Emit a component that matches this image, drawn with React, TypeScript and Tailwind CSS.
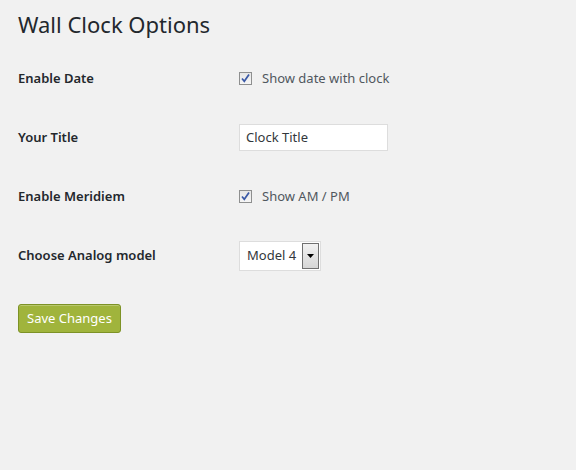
import type React from "react";

const font = { fontFamily: '"Noto Sans", "Open Sans", Arial, sans-serif' };

const CheckBox: React.FC = () => (
  <span className="flex h-[13px] w-[13px] items-center justify-center border border-[#8e8f8f] bg-gradient-to-b from-[#e6e6e6] to-[#f6f6f6]">
    <svg width="11" height="11" viewBox="0 0 11 11">
      <path d="M2 5.5 L4.3 8.3 L9 1.5" fill="none" stroke="#3a59a6" strokeWidth="1.7" />
    </svg>
  </span>
);

const Row: React.FC<{ label: string; children: React.ReactNode }> = ({ label, children }) => (
  <div className="flex h-[59px] items-center">
    <div className="w-[221px] text-[13px] font-semibold text-[#23282d]">{label}</div>
    <div className="flex items-center">{children}</div>
  </div>
);

export default function App() {
  return (
    <div className="min-h-[470px] w-[576px] bg-[#f1f1f1] px-[18px] pt-[9px]" style={font}>
      <h1 className="text-[22px] leading-[30px] font-normal text-[#23282d]">Wall Clock Options</h1>
      <div className="mt-[10px]">
        <Row label="Enable Date">
          <CheckBox />
          <span className="ml-[10px] text-[13px] text-[#50575e]">Show date with clock</span>
        </Row>
        <Row label="Your Title">
          <div className="flex h-[27px] w-[149px] items-center border border-[#dddddd] bg-white px-[6px] text-[13px] text-[#32373c]">
            Clock Title
          </div>
        </Row>
        <Row label="Enable Meridiem">
          <CheckBox />
          <span className="ml-[10px] text-[13px] text-[#50575e]">Show AM / PM</span>
        </Row>
        <Row label="Choose Analog model">
          <div className="flex h-[30px] w-[82px] items-center justify-between border border-[#dddddd] bg-white pl-[7px] pr-[1px] text-[13px] text-[#32373c]">
            <span>Model 4</span>
            <span className="flex h-[26px] w-[17px] items-center justify-center border border-[#707070] bg-gradient-to-b from-[#f2f2f2] to-[#d6d6d6]">
              <svg width="7" height="4" viewBox="0 0 7 4">
                <path d="M0 0 H7 L3.5 4 Z" fill="#000" />
              </svg>
            </span>
          </div>
        </Row>
      </div>
      <button
        className="mt-[19px] flex h-[29px] items-center rounded-[3px] border border-[#7d9226] bg-[#a0b43c] px-[8px] pt-[1px] text-[13px] text-white shadow-[inset_0_1px_0_rgba(255,255,255,0.25)]"
        style={font}
      >
        Save Changes
      </button>
    </div>
  );
}
